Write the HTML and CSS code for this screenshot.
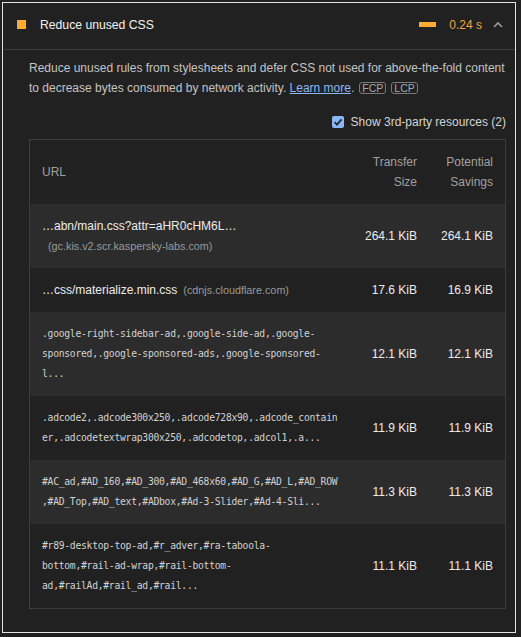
FILE: index.html
```html
<!DOCTYPE html>
<html lang="en">
<head>
<meta charset="utf-8">
<title>Reduce unused CSS</title>
<link rel="stylesheet" href="styles.css">
</head>
<body>
<div class="frame">
  <div class="audit-header">
    <span class="score-icon"></span>
    <span class="audit-title">Reduce unused CSS</span>
    <span class="savings-bar"></span>
    <span class="savings-value">0.24 s</span>
    <svg class="chevron" width="10" height="7" viewBox="0 0 10 7"><polyline points="1,6 5,2 9,6" fill="none" stroke="#9a9a9a" stroke-width="1.6"/></svg>
  </div>
  <div class="audit-body">
    <p class="description">Reduce unused rules from stylesheets and defer CSS not used for above-the-fold content to decrease bytes consumed by network activity. <a class="learn" href="#">Learn more</a>.<span class="badge">FCP</span><span class="badge">LCP</span></p>
    <label class="toggle">
      <span class="checkbox"><svg width="12" height="12" viewBox="0 0 12 12"><polyline points="2.6,6.2 5,8.6 9.6,3.4" fill="none" stroke="#1f2b3a" stroke-width="1.8"/></svg></span>
      <span>Show 3rd-party resources (2)</span>
    </label>
    <div class="table">
      <div class="row head">
        <div class="cell url">URL</div>
        <div class="cell num">Transfer<br>Size</div>
        <div class="cell num">Potential<br>Savings</div>
      </div>
      <div class="row stripe">
        <div class="cell url"><span class="link">…abn/main.css?attr=aHR0cHM6L…</span><span class="host host-block">(gc.kis.v2.scr.kaspersky-labs.com)</span></div>
        <div class="cell num">264.1 KiB</div>
        <div class="cell num">264.1 KiB</div>
      </div>
      <div class="row">
        <div class="cell url"><span class="link">…css/materialize.min.css</span><span class="host">(cdnjs.cloudflare.com)</span></div>
        <div class="cell num">17.6 KiB</div>
        <div class="cell num">16.9 KiB</div>
      </div>
      <div class="row stripe">
        <div class="cell url code">.google-right-sidebar-ad,.google-side-ad,.google-sponsored,.google-sponsored-ads,.google-sponsored-l...</div>
        <div class="cell num">12.1 KiB</div>
        <div class="cell num">12.1 KiB</div>
      </div>
      <div class="row">
        <div class="cell url code">.adcode2,.adcode300x250,.adcode728x90,.adcode_container,.adcodetextwrap300x250,.adcodetop,.adcol1,.a...</div>
        <div class="cell num">11.9 KiB</div>
        <div class="cell num">11.9 KiB</div>
      </div>
      <div class="row stripe">
        <div class="cell url code">#AC_ad,#AD_160,#AD_300,#AD_468x60,#AD_G,#AD_L,#AD_ROW,#AD_Top,#AD_text,#ADbox,#Ad-3-Slider,#Ad-4-Sli...</div>
        <div class="cell num">11.3 KiB</div>
        <div class="cell num">11.3 KiB</div>
      </div>
      <div class="row">
        <div class="cell url code">#r89-desktop-top-ad,#r_adver,#ra-taboola-bottom,#rail-ad-wrap,#rail-bottom-ad,#railAd,#rail_ad,#rail...</div>
        <div class="cell num">11.1 KiB</div>
        <div class="cell num">11.1 KiB</div>
      </div>
    </div>
  </div>
</div>
</body>
</html>
```
FILE: styles.css
```css
* { box-sizing: border-box; }
html, body {
  margin: 0;
  padding: 0;
  background: #212121;
}
body {
  font-family: "Liberation Sans", Arial, sans-serif;
  font-size: 12px;
  color: #e8e8e8;
}
.frame {
  margin: 2px;
  width: 514px;
  height: 631px;
  border: 1px solid #e4e4e4;
  background: #212121;
}
.audit-header {
  height: 47px;
  display: flex;
  align-items: center;
  padding: 0 12px 3px 14px;
  border-bottom: 1px solid #3d3d3d;
}
.score-icon {
  width: 9px;
  height: 9px;
  background: #ffaa33;
  flex: none;
}
.audit-title {
  margin-left: 14px;
  flex: 1;
  color: #f2f2f2;
  font-size: 12.2px;
}
.savings-bar {
  width: 17px;
  height: 5px;
  background: #ffaa33;
}
.savings-value {
  margin-left: 13px;
  color: #f0a33c;
}
.chevron {
  margin-left: 11px;
  display: block;
}
.audit-body {
  padding: 0 9px 0 26px;
}
.description {
  margin: 8px 0 0;
  line-height: 20px;
  color: #c4c4c4;
}
.learn {
  color: #8ab8f6;
  text-decoration: underline;
}
.badge {
  display: inline-block;
  margin-left: 5px;
  border: 1px solid #7a7a7a;
  border-radius: 3px;
  padding: 0 2px;
  font-size: 10.5px;
  line-height: 10px;
  color: #a8a8a8;
  vertical-align: 0px;
}
.toggle {
  margin-top: 14px;
  height: 20px;
  display: flex;
  justify-content: flex-end;
  align-items: center;
  gap: 7px;
  color: #d4d4d4;
}
.checkbox {
  width: 12px;
  height: 12px;
  border-radius: 2px;
  background: #8ab8f6;
  display: block;
}
.checkbox svg { display: block; }
.table {
  margin-top: 7px;
  border: 1px solid #3d3d3d;
}
.row {
  display: grid;
  grid-template-columns: 322px 77px 76px;
  align-items: center;
}
.stripe {
  background: #2c2c2d;
}
.cell {
  padding: 12px;
  line-height: 20px;
}
.head .cell {
  color: #a0a0a0;
}
.num {
  text-align: right;
  color: #ececec;
  white-space: nowrap;
}
.head .num { color: #a0a0a0; }
.link {
  color: #ececec;
}
.host {
  margin-left: 6px;
  font-size: 10.8px;
  color: #9a9a9a;
}
.host-block {
  display: block;
}
.code {
  font-family: "DejaVu Sans Mono", monospace;
  font-size: 9.7px;
  letter-spacing: -0.26px;
  color: #d2d2d2;
  overflow-wrap: break-word;
}
```
